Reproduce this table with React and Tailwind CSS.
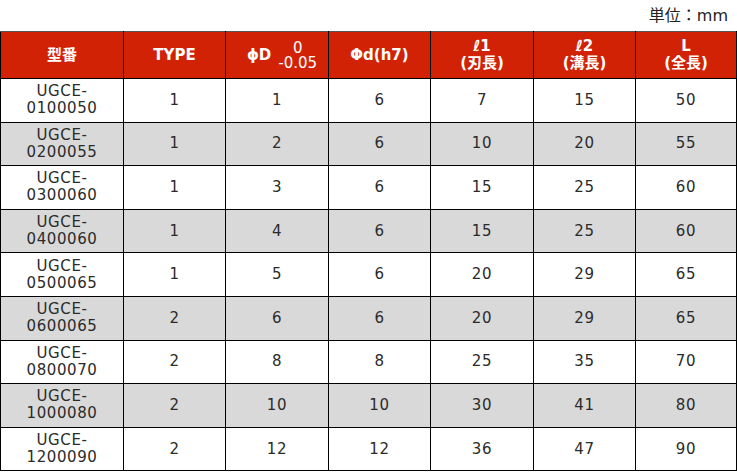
import React from 'react';

const rows = [
    ['0100050', 1, 1, 6, 7, 15, 50],
    ['0200055', 1, 2, 6, 10, 20, 55],
    ['0300060', 1, 3, 6, 15, 25, 60],
    ['0400060', 1, 4, 6, 15, 25, 60],
    ['0500065', 1, 5, 6, 20, 29, 65],
    ['0600065', 2, 6, 6, 20, 29, 65],
    ['0800070', 2, 8, 8, 25, 35, 70],
    ['1000080', 2, 10, 10, 30, 41, 80],
    ['1200090', 2, 12, 12, 36, 47, 90],
];

const font = { fontFamily: '"DejaVu Sans", "Noto Sans CJK JP", sans-serif' };

function App() {
    return (
        <div className="w-[737px] h-[476px] bg-white text-[#2b2b2b]" style={font}>
            <div className="h-[31px] flex items-center justify-end pr-[9px] text-[16px] text-[#222]">
                単位：mm
            </div>
            <table className="w-[737px] border-collapse table-fixed text-[15px] leading-[17px]">
                <colgroup>
                    <col className="w-[123px]" />
                    <col className="w-[102px]" />
                    <col className="w-[103px]" />
                    <col className="w-[102px]" />
                    <col className="w-[103px]" />
                    <col className="w-[102px]" />
                    <col />
                </colgroup>
                <thead>
                    <tr className="h-[47px] bg-[#d22205] text-white font-bold">
                        <th className="border border-black border-t-[#555]">型番</th>
                        <th className="border border-black border-t-[#555]">TYPE</th>
                        <th className="border border-black border-t-[#555]">
                            <div className="flex items-center justify-center gap-[7px] pl-[10px]">
                                <span>ϕD</span>
                                <span className="flex flex-col items-center font-normal text-[15px] leading-[15px] pt-[1px]">
                                    <span>0</span>
                                    <span>-0.05</span>
                                </span>
                            </div>
                        </th>
                        <th className="border border-black border-t-[#555]">Φd(h7)</th>
                        <th className="border border-black border-t-[#555]">
                            ℓ1<br />(刃長)
                        </th>
                        <th className="border border-black border-t-[#555]">
                            ℓ2<br />(溝長)
                        </th>
                        <th className="border border-black border-t-[#555]">
                            L<br />(全長)
                        </th>
                    </tr>
                </thead>
                <tbody className="tracking-[0.6px]">
                    {rows.map((r, i) => (
                        <tr key={r[0]} className={`h-[43.6px] ${i % 2 ? 'bg-[#d9d9d9]' : 'bg-white'}`}>
                            <td className="border border-black text-center">
                                UGCE-<br />{r[0]}
                            </td>
                            {r.slice(1).map((v, j) => (
                                <td key={j} className="border border-black text-center">{v}</td>
                            ))}
                        </tr>
                    ))}
                </tbody>
            </table>
        </div>
    );
}

export default App;
